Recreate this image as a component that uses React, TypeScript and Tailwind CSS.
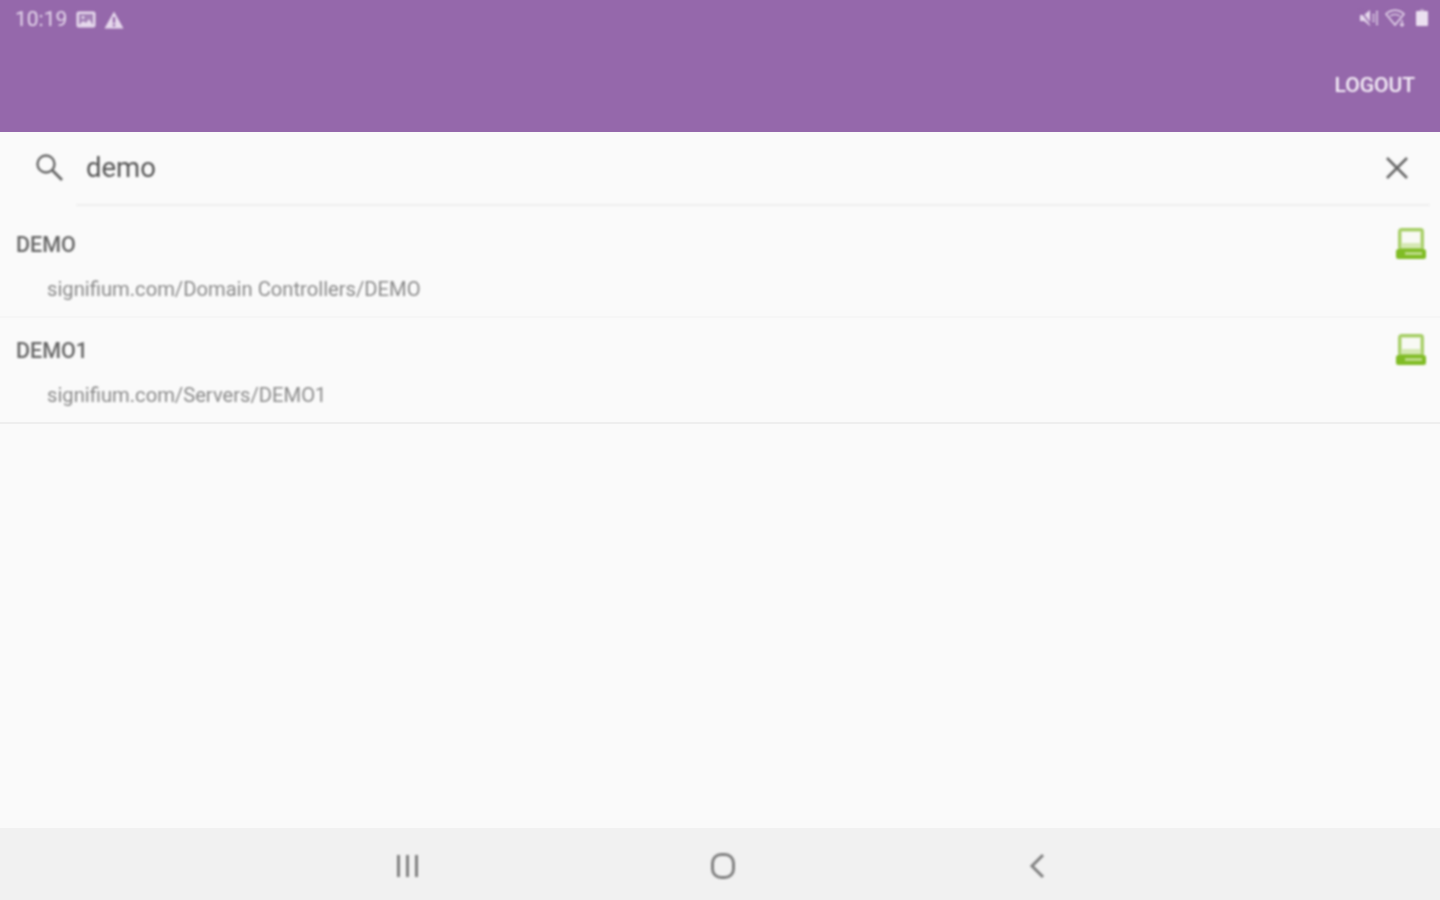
function ImageIcon() {
  return (
    <svg width="20" height="17" viewBox="0 0 20 17" className="block">
      <rect x="0.5" y="0.5" width="19" height="16" rx="2" fill="#e6d9ec" />
      <rect x="3" y="3" width="14" height="11" fill="#a583b8" />
      <circle cx="7" cy="6.5" r="1.4" fill="#e6d9ec" />
      <path d="M3 14l4-4 3 2 3-4 4 6z" fill="#e6d9ec" />
    </svg>
  );
}

function WarnIcon() {
  return (
    <svg width="20" height="18" viewBox="0 0 20 18" className="block">
      <path d="M10 0.5L19.5 17.5H0.5Z" fill="#e6d9ec" />
      <rect x="8.8" y="6" width="2.4" height="6" fill="#9568ab" />
      <rect x="8.8" y="13.2" width="2.4" height="2.2" fill="#9568ab" />
    </svg>
  );
}

function MuteIcon() {
  return (
    <svg width="21" height="18" viewBox="0 0 21 18" className="block">
      <path d="M1 6h4l6-5v16l-6-5H1z" fill="#e6d9ec" />
      <path d="M1 1l12 16" stroke="#9568ab" strokeWidth="1.5" />
      <path d="M14.5 5v8M18 2v14" stroke="#e6d9ec" strokeWidth="2" strokeDasharray="2 1" />
    </svg>
  );
}

function WifiIcon() {
  return (
    <svg width="21" height="18" viewBox="0 0 21 18" fill="none" className="block">
      <path d="M1 5c5-5 13-5 18 0l-9 11z" stroke="#e6d9ec" strokeWidth="1.5" />
      <path d="M5 7c3-2 7-2 10 0" stroke="#e6d9ec" strokeWidth="1.2" />
      <path d="M17 11v6M15 15l2 2 2-2" stroke="#e6d9ec" strokeWidth="1.3" />
    </svg>
  );
}

function BatteryIcon() {
  return (
    <svg width="12" height="18" viewBox="0 0 12 18" className="block">
      <rect x="4" y="0" width="4" height="3" fill="#b89ac6" />
      <rect x="0" y="2" width="12" height="15" rx="1" fill="#ebe0f0" />
    </svg>
  );
}

function SearchIcon() {
  return (
    <svg width="30" height="30" viewBox="0 0 30 30" fill="none" className="block">
      <circle cx="11" cy="11" r="8.5" stroke="#666666" strokeWidth="2.4" />
      <path d="M17.5 17.5L27 27" stroke="#666666" strokeWidth="2.8" />
    </svg>
  );
}

function ClearIcon() {
  return (
    <svg width="24" height="24" viewBox="0 0 24 24" fill="none" className="block">
      <path d="M2 2l20 20M22 2L2 22" stroke="#666666" strokeWidth="2.6" />
    </svg>
  );
}

function ComputerIcon() {
  return (
    <svg width="32" height="32" viewBox="0 0 32 32" className="block">
      <rect x="4.5" y="1.5" width="23" height="20" rx="2" fill="#d5e8b4" stroke="#a4cd62" strokeWidth="2.8" />
      <rect x="7" y="4" width="18" height="11" fill="#f8f9f4" />
      <rect x="1" y="21" width="30" height="10" rx="2.5" fill="#80bc25" />
      <rect x="10" y="24" width="17" height="3" fill="#bcdb86" />
    </svg>
  );
}

const results = [
  { name: "DEMO", path: "signifium.com/Domain Controllers/DEMO", row: "h-[112px] pt-[23px] border-[#f6f6f6]" },
  { name: "DEMO1", path: "signifium.com/Servers/DEMO1", row: "h-[106px] pt-[17px] border-[#eeeeee]" },
];

export default function App() {
  return (
    <div className="flex h-[900px] w-[1440px] flex-col overflow-hidden bg-[#fafafa] font-['Roboto',sans-serif]">
      <header className="h-[132px] shrink-0 bg-[#9568ab]">
        <div className="flex h-[38px] items-center justify-between pl-[15px] pr-[12px] blur-[0.8px]">
          <div className="flex items-center gap-[8px] pt-[1px]">
            <span className="mr-[1px] text-[21px] text-[#e6d9ec]">10:19</span>
            <ImageIcon />
            <WarnIcon />
          </div>
          <div className="flex items-center gap-[5px] pb-[2px]">
            <MuteIcon />
            <WifiIcon />
            <div className="ml-[5px]">
              <BatteryIcon />
            </div>
          </div>
        </div>
        <div className="flex justify-end pr-[25px] pt-[33px] blur-[0.8px]">
          <span className="text-[21px] leading-[28px] font-medium text-[#f6f0f8]">LOGOUT</span>
        </div>
      </header>

      <div className="flex h-[72px] shrink-0 items-center pl-[35px] pr-[31px] blur-[0.8px]">
        <SearchIcon />
        <span className="ml-[21px] flex-1 text-[27.5px] text-[#555555]">demo</span>
        <ClearIcon />
      </div>
      <div className="ml-[76px] mr-[10px] h-[2px] shrink-0 bg-[#efefef] blur-[0.8px]" />

      {results.map((r) => (
        <div key={r.name} className={`${r.row} shrink-0 border-b-2 pl-[16px] pr-[13px]`}>
          <div className="flex items-start justify-between blur-[0.8px]">
            <span className="text-[21.5px] leading-[32px] font-medium text-[#666666]">{r.name}</span>
            <div className="-mt-[1px]">
              <ComputerIcon />
            </div>
          </div>
          <div className="mt-[12px] pl-[31px] text-[20.2px] leading-[32px] text-[#8a8a8a] blur-[0.8px]">{r.path}</div>
        </div>
      ))}

      <div className="flex-1" />

      <nav className="flex h-[72px] shrink-0 items-center bg-[#f1f1f1] pt-[4px]">
        <div className="flex w-full items-center justify-between pl-[397px] pr-[395px] blur-[0.8px]">
          <div className="flex gap-[6px]">
            <span className="h-[22px] w-[3px] bg-[#808080]" />
            <span className="h-[22px] w-[3px] bg-[#808080]" />
            <span className="h-[22px] w-[3px] bg-[#808080]" />
          </div>
          <div className="mr-[2px] h-[26px] w-[24px] rounded-[10px] border-[3px] border-[#808080]" />
          <svg width="16" height="26" viewBox="0 0 16 26" fill="none" className="block">
            <path d="M14 2L3 13l11 11" stroke="#808080" strokeWidth="3" />
          </svg>
        </div>
      </nav>
    </div>
  );
}
